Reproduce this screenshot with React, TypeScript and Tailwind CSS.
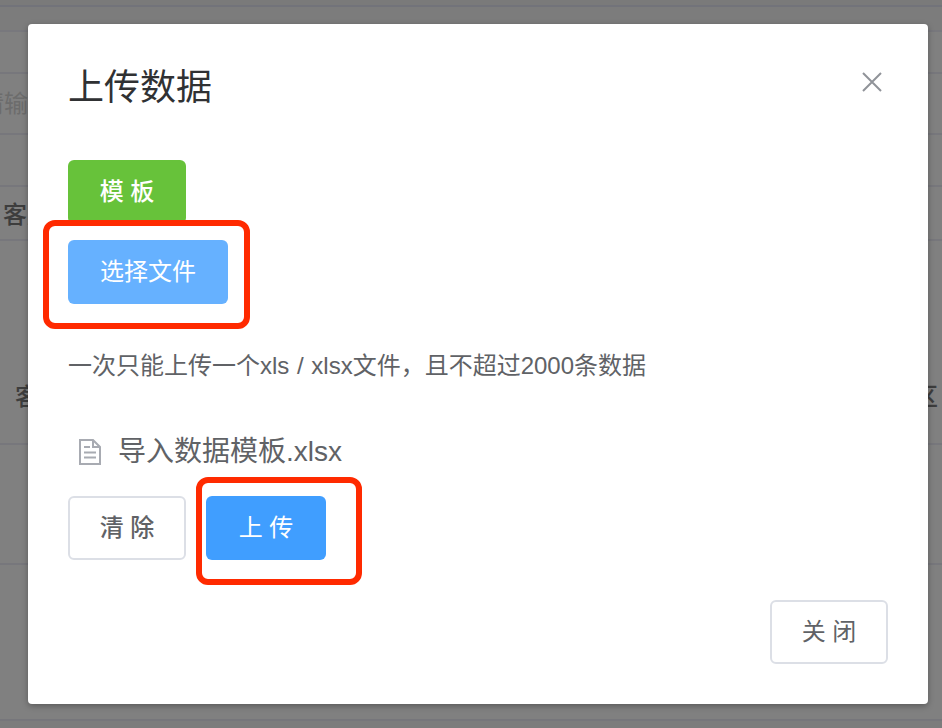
const font = { fontFamily: '"Liberation Sans", "Noto Sans CJK SC", sans-serif' };

function FileIcon() {
  return (
    <svg width="22" height="26" viewBox="0 0 22 26" fill="none" stroke="#a8abb2" strokeWidth="2">
      <path d="M1 1H14L21 8V25H1Z" />
      <path d="M14 1V8H21" />
      <path d="M5 8H11M5 13.5H17M5 18.5H17" />
    </svg>
  );
}

export default function App() {
  return (
    <div className="relative h-[728px] w-[942px] overflow-hidden bg-[#808080]" style={font}>
      <div className="flex h-full flex-col">
        <div className="h-[7px] shrink-0 border-b-2 border-[#72737a] bg-[#7a7a7a]" />
        <div className="h-[25px] shrink-0 border-b-2 border-[#78787d] bg-[#7c7c7c]" />
        <div className="h-[42px] shrink-0 border-b-2 border-[#77777c]" />
        <div className="flex h-[61px] shrink-0 items-center border-b-2 border-[#77777c] text-[24px] text-[#6c6c6c]">
          <span className="ml-[-20px] whitespace-nowrap">请输入</span>
        </div>
        <div className="h-[52px] shrink-0 border-b-2 border-[#77777c]" />
        <div className="flex h-[54px] shrink-0 items-center border-b-2 border-[#77777c] pl-[3px] pt-1 text-[24px] font-medium text-[#3d3d3d]">
          客户名称
        </div>
        <div className="flex h-[204px] shrink-0 items-end justify-between border-b-2 border-[#77777c] pb-[28px] pl-[15px] pr-[4px] text-[24px] font-medium text-[#3d3d3d]">
          <span>客户</span>
          <span>区</span>
        </div>
        <div className="h-[120px] shrink-0 border-b-2 border-[#77777c]" />
        <div className="h-[156px] shrink-0 border-b-2 border-[#76767b]" />
        <div className="flex-1 bg-[#7c7c7c]" />
      </div>

      <div className="absolute left-[28px] top-[24px] flex h-[680px] w-[900px] flex-col rounded-[4px] bg-white px-10 pt-10 shadow-[0_2px_6px_rgba(0,0,0,0.3)]">
        <div className="flex items-start justify-between">
          <h1 className="text-[36px] leading-[48px] text-[#303133]">上传数据</h1>
          <svg width="20" height="20" viewBox="0 0 20 20" className="mr-[6px] mt-[8px]" stroke="#909399" strokeWidth="2" fill="none">
            <path d="M1 1L19 19M19 1L1 19" />
          </svg>
        </div>
        <div className="mt-[48px] flex flex-col items-start">
          <button className="h-16 w-[118px] rounded-[6px] bg-[#67c23a] text-[24px] font-medium text-white">模 板</button>
          <button className="mt-4 h-16 w-40 rounded-[6px] bg-[#66b1ff] text-[24px] text-white">选择文件</button>
        </div>
        <p className="mt-[42px] text-[24px] leading-[40px] text-[#606266] [word-spacing:1px]">一次只能上传一个xls / xlsx文件，且不超过2000条数据</p>
        <div className="mt-[46px] flex h-[40px] items-center pl-[11px]">
          <FileIcon />
          <span className="ml-[17px] text-[28px] text-[#606266]">导入数据模板.xlsx</span>
        </div>
        <div className="mt-[24px] flex gap-5">
          <button className="h-16 w-[118px] rounded-[6px] border-2 border-[#dcdfe6] bg-white text-[24px] font-medium text-[#606266]">清 除</button>
          <button className="h-16 w-[120px] rounded-[6px] bg-[#409eff] text-[24px] text-white">上 传</button>
        </div>
        <div className="mt-10 flex justify-end">
          <button className="h-16 w-[118px] rounded-[6px] border-2 border-[#dcdfe6] bg-white text-[24px] text-[#606266]">关 闭</button>
        </div>
      </div>

      <div className="absolute left-[43px] top-[220px] h-[109px] w-[207px] rounded-[12px] border-[6px] border-[#ff2a00]" />
      <div className="absolute left-[196px] top-[477px] h-[108px] w-[166px] rounded-[12px] border-[6px] border-[#ff2a00]" />
    </div>
  );
}
